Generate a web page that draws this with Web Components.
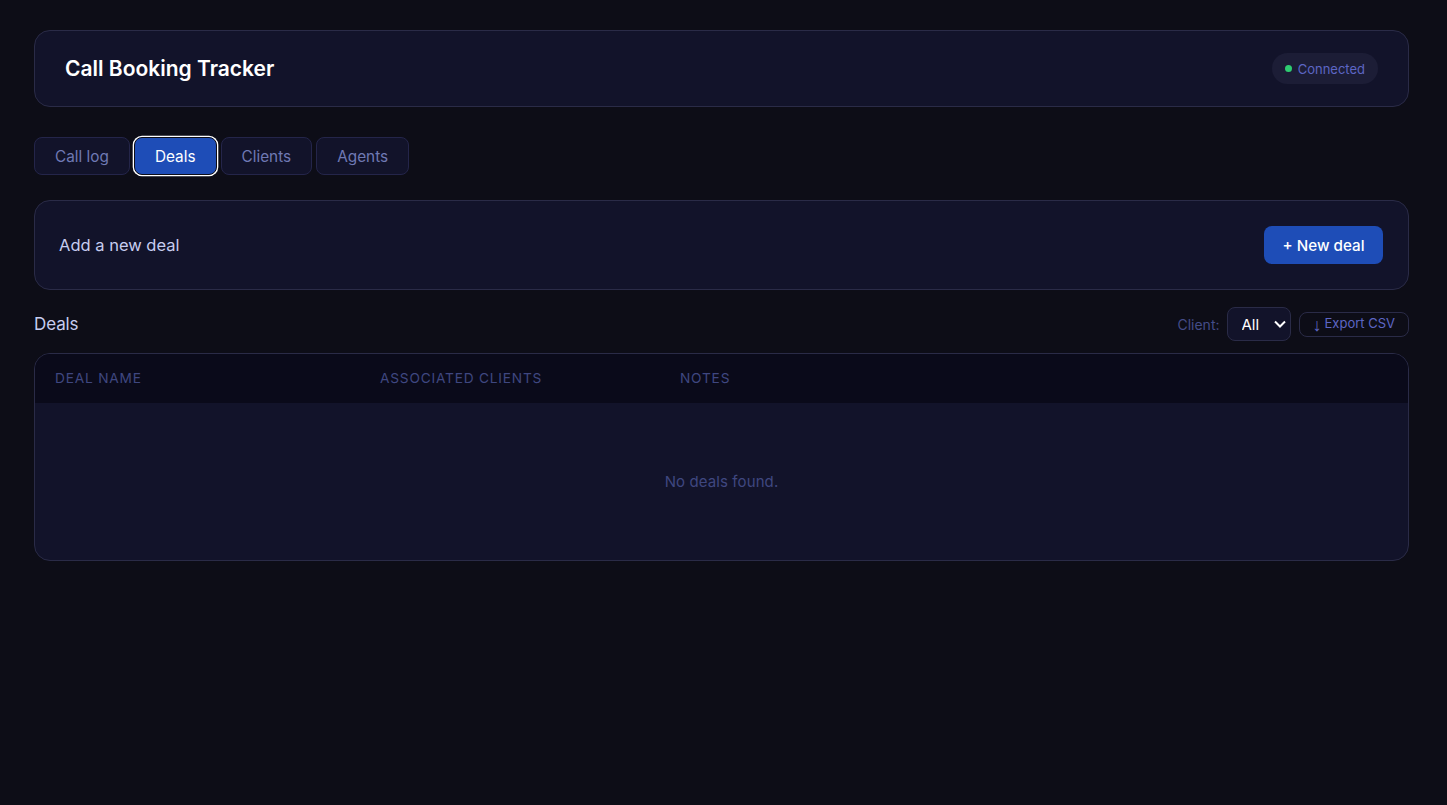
<!DOCTYPE html>
<html><head><meta charset="utf-8">
<style>
html,body{margin:0;padding:0;background:#0d0d17;height:100%}
body{font-family:Inter,"Liberation Sans",sans-serif;color:#fff}
</style></head><body>
<app-shell>
  <app-header title="Call Booking Tracker" status="Connected"></app-header>
  <tab-bar>
    <tab-button>Call log</tab-button>
    <tab-button active>Deals</tab-button>
    <tab-button>Clients</tab-button>
    <tab-button>Agents</tab-button>
  </tab-bar>
  <new-card label="Add a new deal" action="+ New deal"></new-card>
  <section-bar heading="Deals"></section-bar>
  <deals-table></deals-table>
</app-shell>
<script>
function def(name,html){
  customElements.define(name,class extends HTMLElement{
    constructor(){super();this.attachShadow({mode:'open'});}
    connectedCallback(){
      this.shadowRoot.innerHTML=typeof html==='function'?html(this):html;
    }
  });
}
def('app-shell',`<style>:host{display:block;padding:30px 38px 0 34px}</style><slot></slot>`);
def('app-header',e=>`<style>
:host{display:flex;align-items:center;justify-content:space-between;box-sizing:border-box;height:77px;padding:0 30px;background:#12132a;border:1px solid #2a2b47;border-radius:16px}
h1{margin:0;font-size:21px;font-weight:600;color:#fff}
.pill{display:flex;align-items:center;gap:6px;height:31px;box-sizing:border-box;padding:0 13px;border-radius:16px;background:#1c1d36;font-size:13px;color:#5d66c4}
.dot{width:7px;height:7px;border-radius:50%;background:#2ecc71}
</style><h1>${e.getAttribute('title')}</h1><div class="pill"><span class="dot"></span>${e.getAttribute('status')}</div>`);
def('tab-bar',`<style>:host{display:flex;gap:4px;margin-top:30px}</style><slot></slot>`);
def('tab-button',e=>`<style>
:host{display:block}
button{display:block;box-sizing:border-box;height:38px;padding:0 20px;border-radius:8px;font:400 15.35px Inter,"Liberation Sans",sans-serif;cursor:pointer;background:#12132a;color:#6f79b4;border:1px solid #24254a}
:host([active]) button{background:#1e4db7;color:#fff;border:1px solid #0d0d17;box-shadow:0 0 0 1.3px #fff}
</style><button><slot></slot></button>`);
def('new-card',e=>`<style>
:host{display:flex;align-items:center;justify-content:space-between;box-sizing:border-box;height:90px;margin-top:25px;padding:0 25px 0 24px;background:#12132a;border:1px solid #2a2b47;border-radius:16px}
span{font-size:16.5px;color:#c7cdf0}
button{box-sizing:border-box;height:38px;padding:0 18.5px;border:0;border-radius:8px;background:#1e4db7;color:#fff;font:500 15.2px Inter,"Liberation Sans",sans-serif}
</style><span>${e.getAttribute('label')}</span><button>${e.getAttribute('action')}</button>`);
def('section-bar',e=>`<style>
:host{display:flex;align-items:center;justify-content:space-between;height:34px;margin-top:17px}
h2{margin:0;font-size:17px;font-weight:400;color:#c7cdf0;letter-spacing:-.1px}
.r{display:flex;align-items:center}
label{font-size:14px;color:#444c88;margin-right:7px}
.s{position:relative;display:block;height:34px}
select{display:block;appearance:none;box-sizing:border-box;height:34px;width:64px;padding:0 0 0 14px;border:1px solid #2a2b47;border-radius:8px;background:#12132a;color:#fff;font:400 15px Inter,"Liberation Sans",sans-serif}
svg{position:absolute;right:5px;top:13px;pointer-events:none}
button{display:flex;align-items:center;box-sizing:border-box;height:25px;margin-left:8px;padding:0 13px 3px 10px;border:1px solid #2a2b47;border-radius:8px;background:transparent;color:#5d66c4;font:400 13px Inter,"Liberation Sans",sans-serif;white-space:nowrap}
.a{display:inline-block;width:15px;font-family:"Liberation Sans",sans-serif;font-size:18px;line-height:18px;position:relative;top:2px}
</style><h2>${e.getAttribute('heading')}</h2><div class="r"><label>Client:</label><div class="s"><select><option>All</option></select><svg width="12" height="8" viewBox="0 0 12 8"><path d="M1 1.5l5 5 5-5" fill="none" stroke="#fff" stroke-width="2"/></svg></div><button><span class="a">↓</span>Export CSV</button></div>`);
def('deals-table',`<style>
:host{display:block;box-sizing:border-box;height:208px;margin-top:12px;background:#12132a;border:1px solid #2a2b47;border-radius:16px;overflow:hidden}
.h{display:grid;grid-template-columns:325px 300px 1fr;align-items:center;box-sizing:border-box;height:49px;padding:0 0 2px 20px;background:#0a0a1a;font-size:13.7px;letter-spacing:.8px;color:#3f4780;text-transform:uppercase}
.e{display:flex;align-items:center;justify-content:center;height:157px;font-size:15px;letter-spacing:.1px;color:#3f4780}
</style><div class="h"><div>Deal name</div><div>Associated clients</div><div>Notes</div></div><div class="e">No deals found.</div>`);
</script></body></html>
